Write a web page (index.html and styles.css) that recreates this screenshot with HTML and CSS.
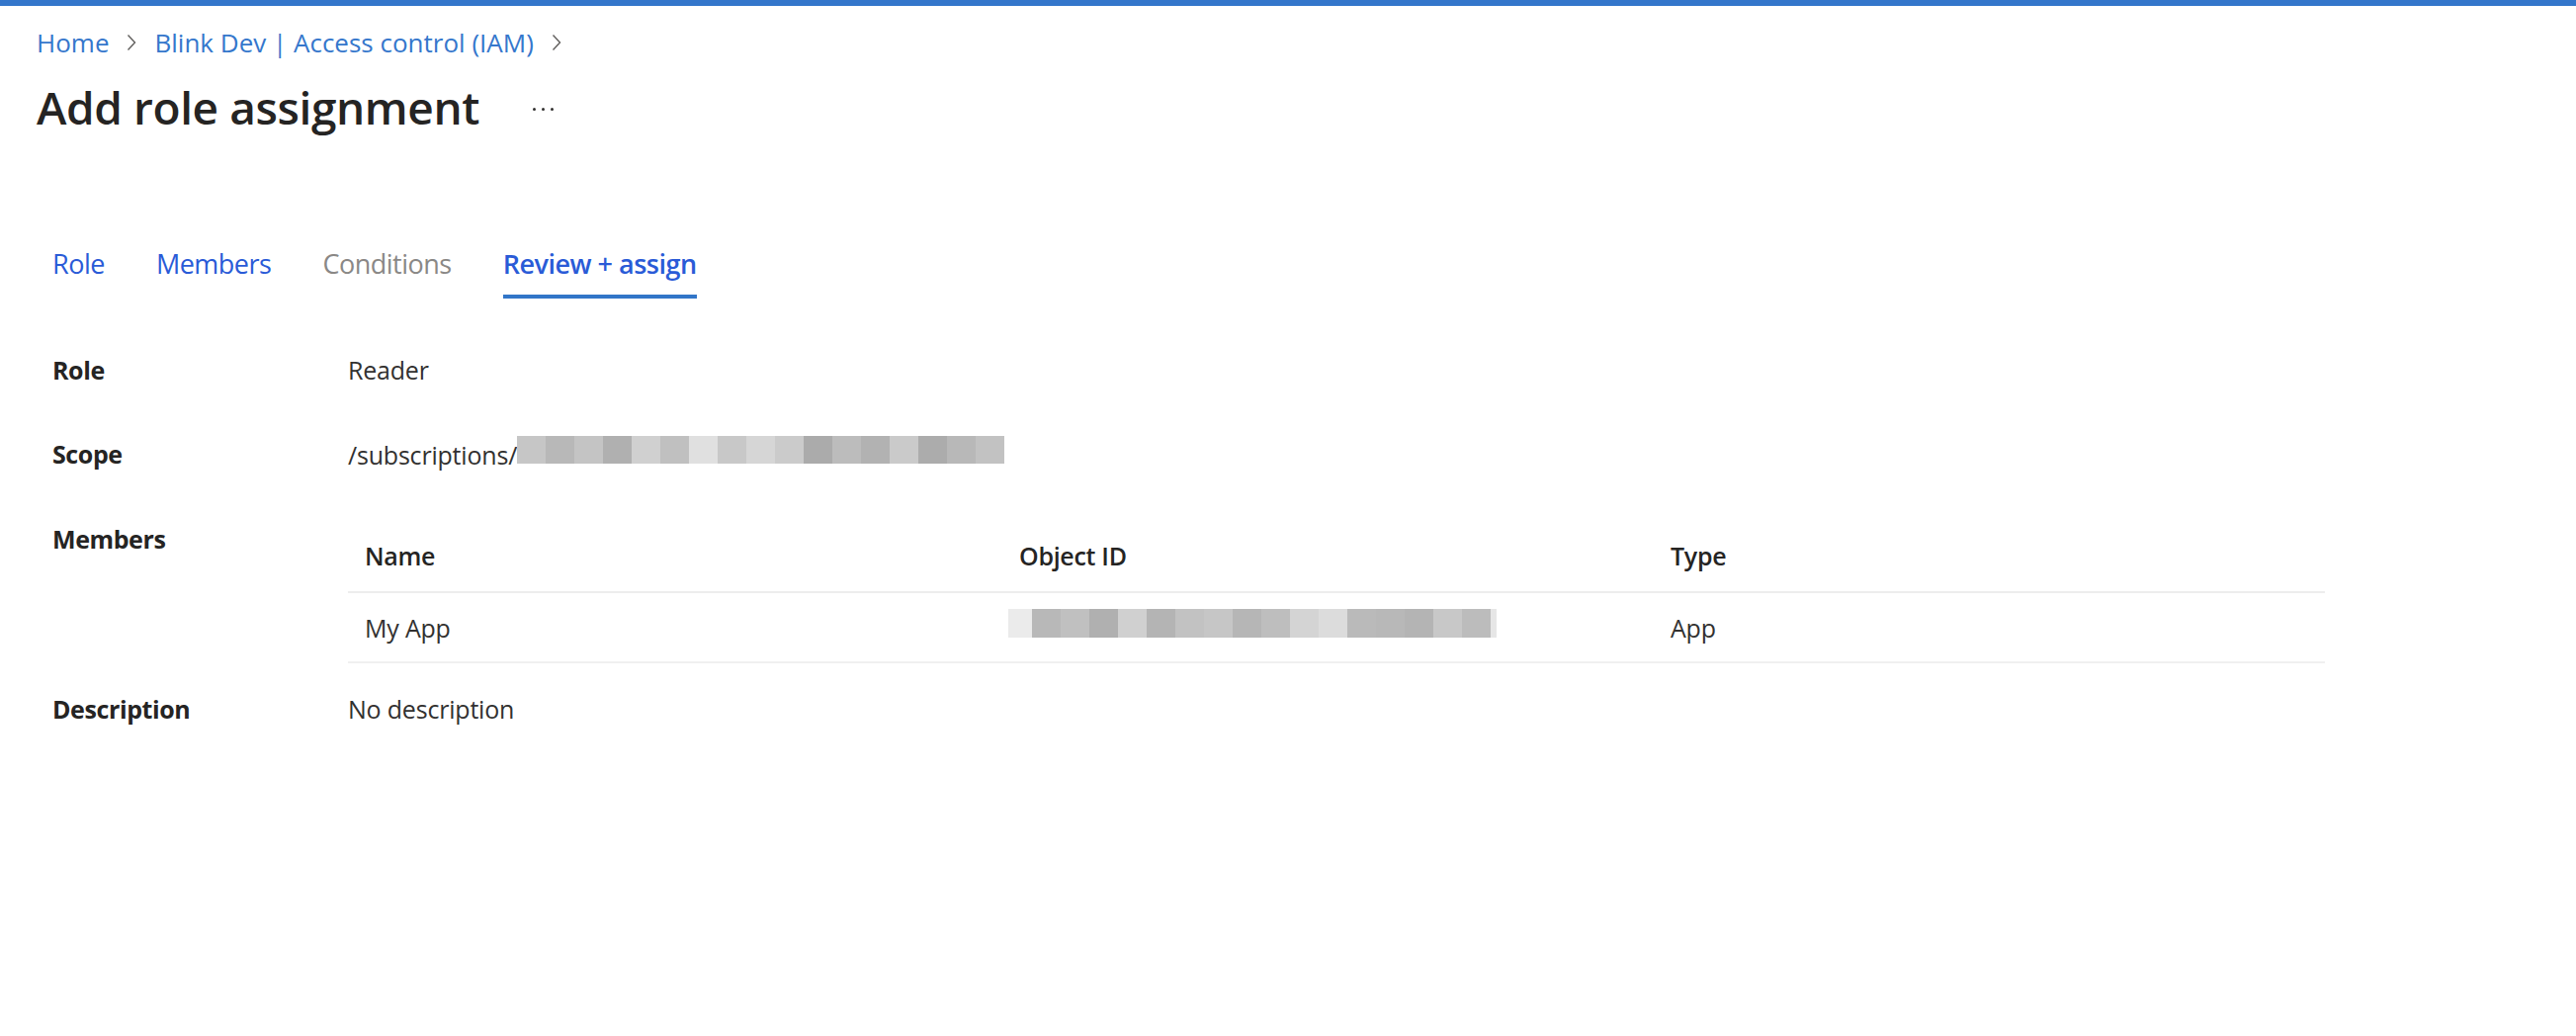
FILE: index.html
```html
<!DOCTYPE html>
<html lang="en">

<head>
    <meta charset="UTF-8">
    <meta name="viewport" content="width=device-width, initial-scale=1.0">
    <title>Add role assignment</title>
    <link rel="stylesheet" href="styles.css">
</head>

<body>
    <div class="topbar"></div>
    <div class="page">
        <nav class="breadcrumb">
            <a href="#">Home</a>
            <svg class="chevron" width="10" height="18" viewBox="0 0 10 18"><path d="M1.5 1.5 L8.5 9 L1.5 16.5" fill="none" stroke="#605e5c" stroke-width="1.4"/></svg>
            <a href="#">Blink Dev | Access control (IAM)</a>
            <svg class="chevron" width="10" height="18" viewBox="0 0 10 18"><path d="M1.5 1.5 L8.5 9 L1.5 16.5" fill="none" stroke="#605e5c" stroke-width="1.4"/></svg>
        </nav>

        <div class="title-row">
            <h1>Add role assignment</h1>
            <button class="more" title="More"><span></span><span></span><span></span></button>
        </div>

        <div class="tabs">
            <a href="#" class="tab">Role</a>
            <a href="#" class="tab">Members</a>
            <a href="#" class="tab disabled">Conditions</a>
            <a href="#" class="tab active">Review + assign</a>
        </div>

        <div class="review">
            <div class="field">
                <div class="label">Role</div>
                <div class="value">Reader</div>
            </div>
            <div class="field">
                <div class="label">Scope</div>
                <div class="value">/subscriptions/<span class="redact"><i class="p1"></i><i class="p2"></i><i class="p3"></i><i class="p4"></i><i class="p5"></i><i class="p6"></i><i class="p7"></i><i class="p8"></i><i class="p9"></i><i class="p10"></i><i class="p11"></i><i class="p12"></i><i class="p13"></i><i class="p14"></i><i class="p15"></i><i class="p16"></i><i class="p17"></i></span></div>
            </div>
            <div class="field members">
                <div class="label">Members</div>
                <table class="members-table">
                    <thead>
                        <tr>
                            <th class="col-name">Name</th>
                            <th class="col-id">Object ID</th>
                            <th>Type</th>
                        </tr>
                    </thead>
                    <tbody>
                        <tr>
                            <td>My App</td>
                            <td><span class="redact id"><i class="q0"></i><i class="q1"></i><i class="q2"></i><i class="q3"></i><i class="q4"></i><i class="q5"></i><i class="q6"></i><i class="q7"></i><i class="q8"></i><i class="q9"></i><i class="q10"></i><i class="q11"></i><i class="q12"></i><i class="q13"></i><i class="q14"></i><i class="q15"></i><i class="q16"></i><i class="q17"></i></span></td>
                            <td>App</td>
                        </tr>
                    </tbody>
                </table>
            </div>
            <div class="field description">
                <div class="label">Description</div>
                <div class="value">No description</div>
            </div>
        </div>
    </div>
</body>

</html>
```

FILE: styles.css
```css
* {
    margin: 0px;
    padding: 0px;
    box-sizing: border-box;
}

body {
    font-family: "Open Sans", "Noto Sans", sans-serif;
    background: #fff;
    color: #323130;
}

a {
    text-decoration: none;
}

.topbar {
    height: 6px;
    background: #3476cb;
}

.page {
    padding-left: 37px;
}

.breadcrumb {
    margin-top: 19px;
    display: flex;
    align-items: center;
    height: 36px;
    font-size: 26px;
    line-height: 36px;
}

.breadcrumb a {
    color: #3577cc;
}

.breadcrumb .chevron {
    margin: 0 18px;
}

.title-row {
    margin-top: 15px;
    display: flex;
    align-items: center;
}

.title-row h1 {
    font-size: 46px;
    line-height: 64px;
    font-weight: 600;
    letter-spacing: -0.4px;
    color: #252423;
}

.more {
    margin-left: 54px;
    margin-top: 4px;
    display: flex;
    gap: 6px;
    background: transparent;
    border: none;
    cursor: pointer;
}

.more span {
    width: 3px;
    height: 3px;
    border-radius: 50%;
    background: #323130;
}

.tabs {
    margin-top: 107px;
    padding-left: 16px;
    display: flex;
    gap: 52px;
}

.tab {
    font-size: 27px;
    line-height: 40px;
    letter-spacing: -0.5px;
    color: #2a5bd7;
    padding-bottom: 11px;
    border-bottom: 4px solid transparent;
}

.tab.disabled {
    color: #8a8886;
}

.tab.active {
    font-weight: 600;
    border-bottom-color: #3276c8;
}

.review {
    margin-top: 54px;
    padding-left: 16px;
    display: flex;
    flex-direction: column;
    gap: 49px;
}

.field {
    display: flex;
    font-size: 25px;
    line-height: 36px;
}

.field .label {
    width: 299px;
    font-weight: 700;
    letter-spacing: -0.4px;
    color: #252423;
}

.field .value {
    color: #323130;
    letter-spacing: -0.2px;
}

.review .description {
    margin-top: -21px;
}

.members-table {
    width: 2000px;
    border-collapse: collapse;
    font-size: 25px;
    line-height: 36px;
}

.members-table th {
    text-align: left;
    font-weight: 600;
    letter-spacing: -0.3px;
    color: #252423;
    padding: 17px 17px 18px;
    border-bottom: 2px solid #ededed;
}

.members-table td {
    padding: 16px 17px;
    border-bottom: 2px solid #f0f0f0;
    color: #323130;
    letter-spacing: -0.2px;
}

.members-table .col-name {
    width: 662px;
}

.members-table .col-id {
    width: 659px;
}

.redact i {
    display: inline-block;
    width: 29px;
    height: 28px;
    vertical-align: 1px;
}

.redact.id {
    margin-left: -11px;
}

.redact.id i {
    height: 29px;
    vertical-align: 0px;
}

.p1 { background: #c6c6c6; }
.p2 { background: #b8b8b8; }
.p3 { background: #c4c4c4; }
.p4 { background: #b0b0b0; }
.p5 { background: #d0d0d0; }
.p6 { background: #c0c0c0; }
.p7 { background: #e0e0e0; }
.p8 { background: #c8c8c8; }
.p9 { background: #d6d6d6; }
.p10 { background: #cbcbcb; }
.p11 { background: #ababab; }
.p12 { background: #bcbcbc; }
.p13 { background: #b2b2b2; }
.p14 { background: #cacaca; }
.p15 { background: #acacac; }
.p16 { background: #b8b8b8; }
.p17 { background: #c2c2c2; }

.redact .q0 { width: 24px; background: #ebebeb; }
.q1 { background: #b8b8b8; }
.q2 { background: #c0c0c0; }
.q3 { background: #b0b0b0; }
.q4 { background: #d0d0d0; }
.q5 { background: #b4b4b4; }
.q6 { background: #c2c2c2; }
.q7 { background: #c6c6c6; }
.q8 { background: #b6b6b6; }
.q9 { background: #bebebe; }
.q10 { background: #d4d4d4; }
.q11 { background: #dcdcdc; }
.q12 { background: #bababa; }
.q13 { background: #b8b8b8; }
.q14 { background: #b4b4b4; }
.q15 { background: #c8c8c8; }
.q16 { background: #bcbcbc; }
.redact .q17 { width: 6px; background: #e6e6e6; }
```
